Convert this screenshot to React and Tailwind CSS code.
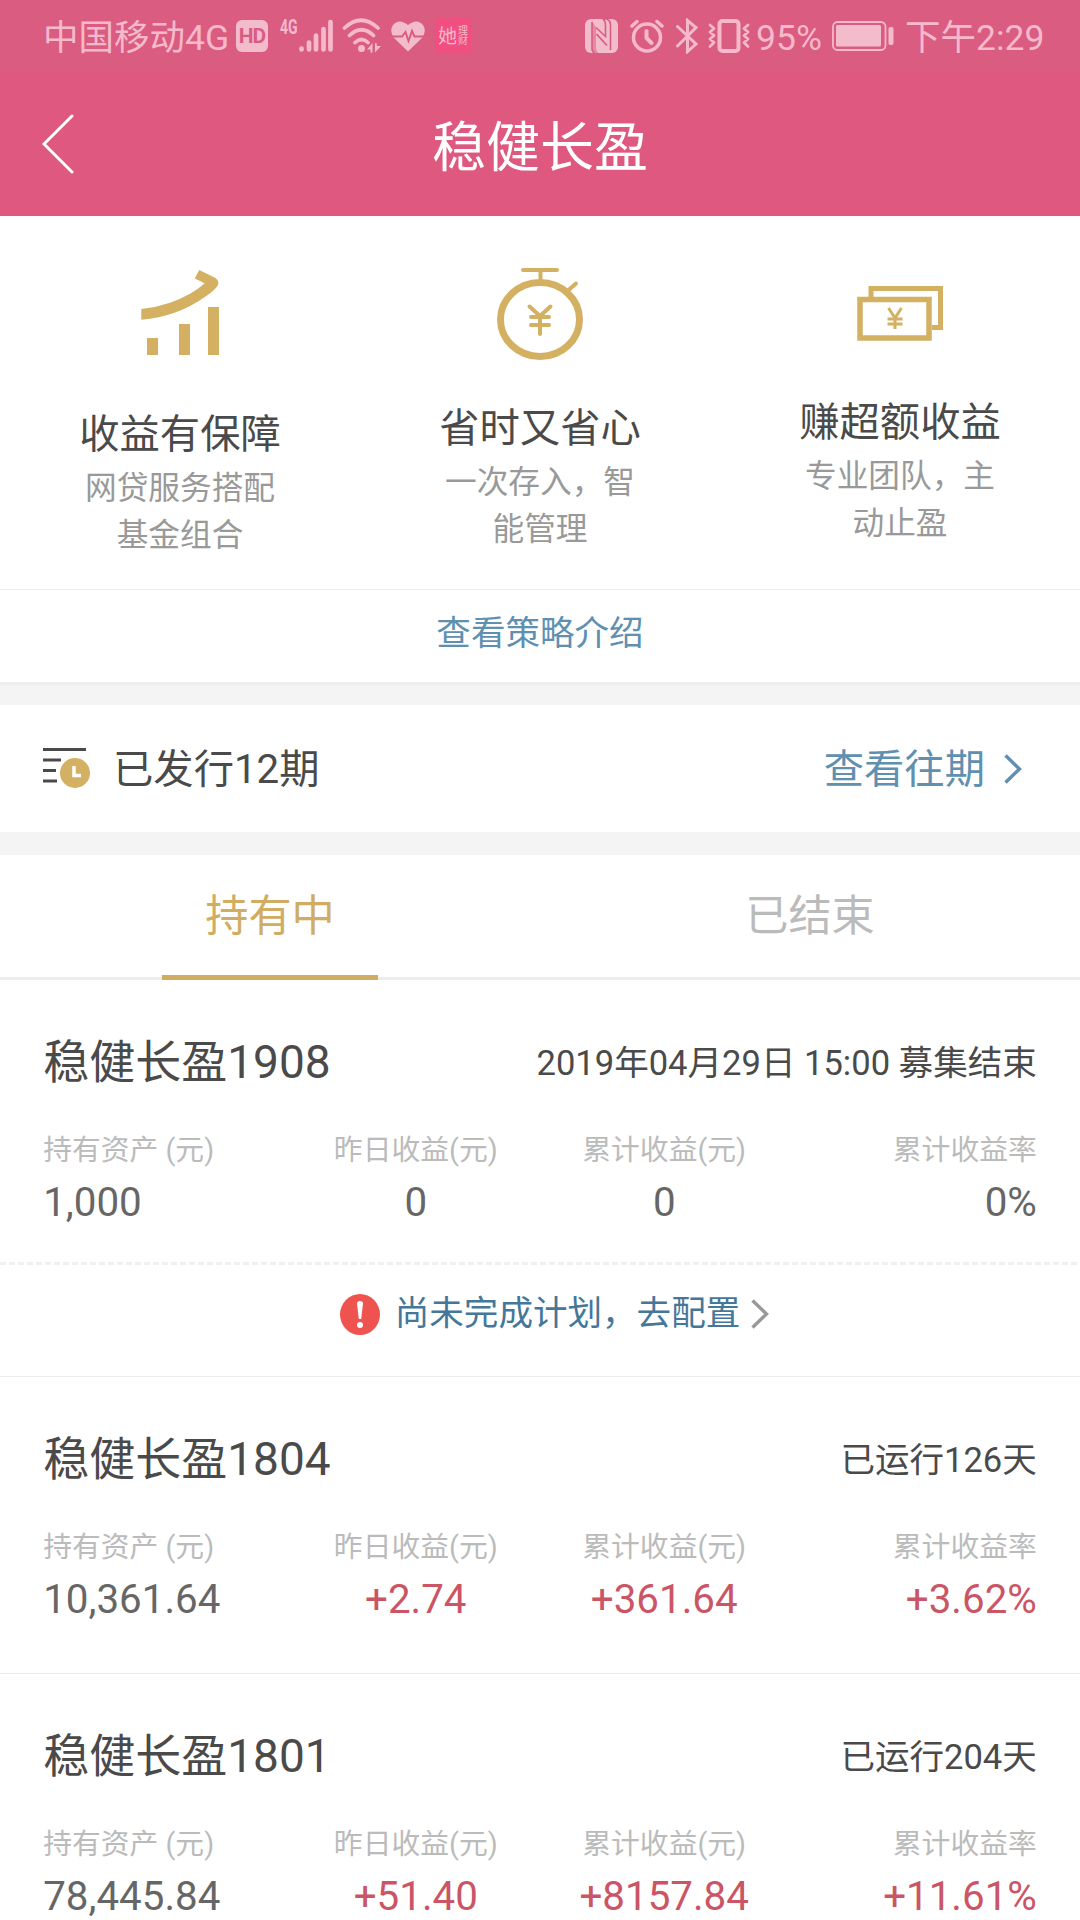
const labels = ["持有资产 (元)", "昨日收益(元)", "累计收益(元)", "累计收益率"];

const plans = [
  {
    name: "稳健长盈1908",
    status: "2019年04月29日 15:00 募集结束",
    values: ["1,000", "0", "0", "0%"],
    pending: true,
  },
  {
    name: "稳健长盈1804",
    status: "已运行126天",
    values: ["10,361.64", "+2.74", "+361.64", "+3.62%"],
  },
  {
    name: "稳健长盈1801",
    status: "已运行204天",
    values: ["78,445.84", "+51.40", "+8157.84", "+11.61%"],
  },
];

const GrowthIcon = () => (
  <svg className="w-[120px] h-[120px]" viewBox="0 0 120 120" fill="#d4b062">
    <path d="M21.300 53Q36 51.500 50 46.700Q72 39 84.700 27.300L74.700 22.500L79.300 14L95.500 22Q100 25 97.500 30Q94 35 83.300 42Q57 60.500 21.300 63.700Z" />
    <path d="M27 82h11v17H27zM59 68h11v31H59zM88 51h11v48H88z" />
  </svg>
);

const TimerIcon = () => (
  <svg
    className="w-[120px] h-[114px]"
    viewBox="0 0 120 114"
    fill="none"
    stroke="#d4b062"
    strokeLinecap="round"
  >
    <ellipse cx="60" cy="63.500" rx="39.500" ry="37" strokeWidth="7" />
    <path d="M43 14h34M60.500 15v11M96 27.500l-8 7" strokeWidth="4" />
    <path d="M49.500 50.500L60 60L70.500 50.500M60 60V78M51 61h18M51 69h18" strokeWidth="4" />
  </svg>
);

const CashIcon = () => (
  <svg className="w-[120px] h-[108px]" viewBox="0 0 120 108" fill="none" stroke="#d4b062">
    <path d="M31 42V32.500H100.500V71.500H92" strokeWidth="5" />
    <rect x="20" y="43.500" width="69" height="38.500" strokeWidth="5.500" />
    <path d="M48.500 52L55 62L61.500 52M55 61V73M47.500 63h15M47.500 68h15" strokeWidth="3" />
  </svg>
);

const features = [
  { icon: <GrowthIcon />, title: "收益有保障", desc: ["网贷服务搭配", "基金组合"] },
  { icon: <TimerIcon />, title: "省时又省心", desc: ["一次存入，智", "能管理"] },
  { icon: <CashIcon />, title: "赚超额收益", desc: ["专业团队，主", "动止盈"] },
];

const StatusBar = () => (
  <div className="h-[72px] flex items-center bg-[#da5c80] text-[#f6b9cc] text-[35.500px] leading-none pl-[43px] whitespace-nowrap">
    <span className="w-[193px] pt-[5px]">中国移动4G</span>
    <span className="w-[32px] h-[32px] rounded-[6px] bg-[#f2bccd] text-[#da5c80] text-[21px] leading-[32px] font-bold text-center tracking-[-1px]">
      HD
    </span>
    <span className="w-[19px] h-[36px] ml-[12px] text-[20px] leading-[18px] font-bold">
      <span className="block origin-left scale-x-[0.700]">4G</span>
    </span>
    <svg className="w-[36px] h-[36px]" viewBox="0 0 36 36" stroke="currentColor" strokeWidth="4.700" strokeLinecap="round">
      <path d="M2.500 30.500v1M10 24.500v7M17 17.500v14M24.500 11v20.500M31.500 4v27.500" />
    </svg>
    <svg className="w-[40px] h-[36px] ml-[7px]" viewBox="0 0 40 36" fill="none" stroke="currentColor" strokeLinecap="round">
      <path d="M2.500 10Q19 -5.500 36 10M7.500 17.500Q19.500 6 31.500 17.500M13 24.500Q19.500 18.500 26 24.500" strokeWidth="3.700" />
      <circle cx="19.500" cy="30.500" r="3.500" fill="currentColor" stroke="none" />
      <path d="M30.500 25v9.500h-2v-3h-3.500zM33 34.500v-9.500h1.500l.5 3h4z" fill="currentColor" stroke="none" />
    </svg>
    <svg className="w-[36px] h-[34px] ml-[8px]" viewBox="0 0 36 34">
      <path d="M18 32.500L4 19Q-1 12 3 6Q9 -1 18 6Q27 -1 33 6Q37 12 32 19Z" fill="#f2bccd" />
      <path d="M1 17.500H12L15.500 13L18.500 22L22 12L24.500 17.500H35" fill="none" stroke="#da5c80" strokeWidth="2" />
    </svg>
    <span className="w-[36px] h-[36px] ml-[9px] flex items-center justify-center gap-px bg-[#f04f80] text-[19px]">
      她
      <span className="w-[10px] flex flex-col text-[10px] leading-[10px]">
        <span>理</span>
        <span>财</span>
      </span>
    </span>
    <svg className="w-[34px] h-[34px] ml-[114px]" viewBox="0 0 34 34">
      <rect width="33" height="34" rx="6" fill="#f2bccd" />
      <path d="M7 3V30Q7 33 9.500 34" fill="none" stroke="#da5c80" strokeWidth="1.600" />
      <path d="M7 2L11 8.500V29Q11 32 13.500 34H9Q7 33 7 29Z" fill="#da5c80" opacity=".55" />
      <path d="M11 8.500L20.500 17.500V6Q20.500 2 18 0H22Q25.500 2 25.500 6V31" fill="none" stroke="#da5c80" strokeWidth="1.600" />
      <path d="M11.500 15L22 26.500" stroke="#da5c80" strokeWidth="1.800" />
    </svg>
    <svg className="w-[34px] h-[34px] ml-[11px]" viewBox="0 0 34 34" fill="none" stroke="currentColor" strokeLinecap="round">
      <circle cx="17" cy="18.500" r="13.500" strokeWidth="3.500" />
      <path d="M16.500 12v7l5 5" strokeWidth="4" />
      <path d="M2 7l5-4.500M32 7l-5-4.500" strokeWidth="3.500" />
    </svg>
    <svg className="w-[24px] h-[36px] ml-[11px]" viewBox="0 0 24 36" fill="none" stroke="currentColor" strokeWidth="3" strokeLinecap="round">
      <path d="M2.500 8.500L21 26L12.500 33.500V2.500L21 9.500L2.500 28" />
    </svg>
    <svg className="w-[42px] h-[34px] ml-[9px]" viewBox="0 0 42 34" fill="none" stroke="currentColor" strokeLinecap="round" strokeLinejoin="round">
      <rect x="11.500" y="2" width="19" height="30" rx="3" strokeWidth="4" />
      <path d="M2 6l4 3.500l-4 3.500l4 3.500l-4 3.500l4 3.500l-4 4M40 6l-4 3.500l4 3.500l-4 3.500l4 3.500l-4 3.500l4 4" strokeWidth="2.800" />
    </svg>
    <span className="w-[76px] ml-[6px] pt-[5px]">95%</span>
    <svg className="w-[62px] h-[30px]" viewBox="0 0 62 30">
      <rect x="1" y="1" width="52.500" height="28" rx="4.500" fill="none" stroke="#f6b9cc" strokeWidth="1.800" />
      <rect x="4" y="4" width="45" height="21.500" rx="1.500" fill="#f2bccd" />
      <rect x="56.500" y="6" width="5" height="18" rx="2" fill="#f2bccd" />
    </svg>
    <span className="ml-[11px] pt-[5px]">下午2:29</span>
  </div>
);

const ChevronRight = ({ className }) => (
  <svg className={className} viewBox="0 0 18 30" fill="none" stroke="currentColor" strokeWidth="3.400">
    <path d="M1.500 1.500L15.500 15L1.500 28.500" />
  </svg>
);

const PlanCard = ({ plan }) => (
  <div className="border-b border-[#ececec]">
    <div className={`px-[43.200px] pt-[50.500px] ${plan.pending ? "h-[282px]" : "h-[295.500px]"}`}>
      <div className="h-[64px] flex items-center justify-between">
        <h3 className="text-[46px]">{plan.name}</h3>
        <span className="pt-[3px] text-[34.560px]">{plan.status}</span>
      </div>
      <div className="grid grid-cols-4 mt-[35.500px]">
        {labels.map((label, i) => (
          <div
            key={label}
            className={`whitespace-nowrap ${i === 0 ? "text-left" : i === 3 ? "text-right" : "text-center"}`}
          >
            <p className="text-[28.800px] leading-[40px] text-[#bbb]">{label}</p>
            <p
              className={`text-[40.320px] leading-[66px] ${
                plan.values[i].startsWith("+") ? "text-[#cb5565]" : "text-[#666]"
              }`}
            >
              {plan.values[i]}
            </p>
          </div>
        ))}
      </div>
    </div>
    {plan.pending && (
      <>
        {/* dashed divider */}
        <div className="h-[3px] bg-[repeating-linear-gradient(90deg,#f0f0f0_0_6px,transparent_6px_9px)]" />
        <div className="h-[111px] pb-[13px] pl-[29px] flex items-center justify-center text-[34.560px] text-[#447799]">
          <svg className="w-[40px] h-[41px] mr-[15px]" viewBox="0 0 40 41">
            <ellipse cx="20" cy="20.500" rx="20" ry="20.500" fill="#ef5350" />
            <path d="M17 9.500Q17 7 20 7Q23 7 23 9.500L21.200 25H18.800Z" fill="#fff" />
            <circle cx="20" cy="31" r="3" fill="#fff" />
          </svg>
          尚未完成计划，去配置
          <ChevronRight className="w-[18px] h-[30px] ml-[11px] text-[#999]" />
        </div>
      </>
    )}
  </div>
);

export default function App() {
  return (
    <div className="w-[1080px] h-[1920px] overflow-hidden bg-white text-[#4a4a4a] font-[Roboto,'Noto_Sans_CJK_SC',sans-serif]">
      <StatusBar />
      <header className="h-[144px] bg-[#df587f] text-white grid grid-cols-[1fr_auto_1fr] items-center px-[42px]">
        <svg className="w-[32px] h-[60px]" viewBox="0 0 32 60" fill="none" stroke="#fff" strokeWidth="3" strokeLinecap="round">
          <path d="M30 2L2 30L30 58" />
        </svg>
        <h1 className="pt-[8px] text-[54px]">稳健长盈</h1>
      </header>

      <section className="h-[373px] pt-[40px] grid grid-cols-3">
        {features.map((f) => (
          <div key={f.title} className="flex flex-col items-center">
            {f.icon}
            <h2 className="mt-[29px] text-[40.320px] leading-[60px]">{f.title}</h2>
            <div className="text-[31.680px] leading-[47px] text-[#999] text-center">
              {f.desc.map((line) => (
                <p key={line}>{line}</p>
              ))}
            </div>
          </div>
        ))}
      </section>
      <div className="h-[93px] border-t border-[#ececec] flex items-center justify-center pb-[4px] text-[34.560px] text-[#6090b0]">
        查看策略介绍
      </div>
      <div className="h-[23px] border-t-[3px] border-[#ededed] bg-[#f4f4f4]" />

      <section className="h-[127px] flex items-center pl-[43px] pr-[58px] text-[40.320px]">
        <svg className="w-[48px] h-[41px]" viewBox="0 0 48 41" fill="none">
          <path d="M0 1.500H43M0 12H18M0 22.500H13M0 33H14" stroke="#4a4a4a" strokeWidth="2.800" />
          <circle cx="32" cy="25" r="15" fill="#d4b062" />
          <path d="M31 18V27.500H38" stroke="#fff" strokeWidth="3.500" />
        </svg>
        <span className="ml-[22px] pt-[3px]">已发行12期</span>
        <span className="ml-auto pt-[3px] text-[#6090b0]">查看往期</span>
        <ChevronRight className="w-[18px] h-[30px] ml-[19px] text-[#6090b0]" />
      </section>
      <div className="h-[23px] bg-[#f4f4f4]" />

      <div className="h-[125px] grid grid-cols-2 border-b-[3px] border-[#ededed] text-[43.200px]">
        <div className="relative flex items-center justify-center pt-[2px] text-[#d0ad62]">
          持有中
          <span className="absolute left-[162px] -bottom-[3px] w-[216px] h-[5px] bg-[#d0ad62]" />
        </div>
        <div className="flex items-center justify-center pt-[2px] text-[#bbb]">已结束</div>
      </div>

      {plans.map((plan) => (
        <PlanCard key={plan.name} plan={plan} />
      ))}
    </div>
  );
}
